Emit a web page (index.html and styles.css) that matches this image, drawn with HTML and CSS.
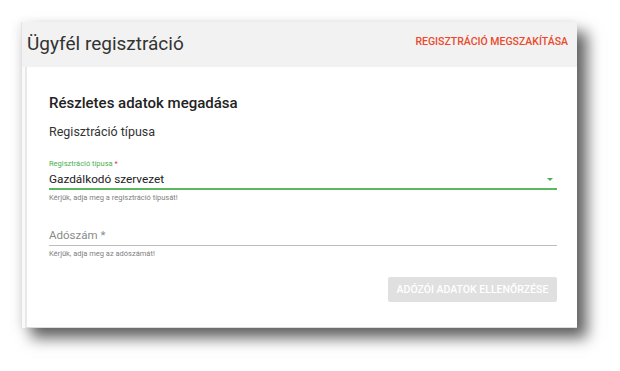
FILE: index.html
```html
<!DOCTYPE html>
<html lang="hu">
<head>
    <meta charset="UTF-8">
    <meta name="viewport" content="width=device-width, initial-scale=1.0">
    <title>Ügyfél regisztráció</title>
    <link rel="stylesheet" href="styles.css">
</head>
<body>
    <div class="page">
        <div class="window">
            <div class="topbar">
                <h1>Ügyfél regisztráció</h1>
                <a href="#" class="cancel-link">Regisztráció megszakítása</a>
            </div>
            <div class="card">
                <h2>Részletes adatok megadása</h2>
                <div class="section-title">Regisztráció típusa</div>

                <div class="field field-select">
                    <label class="field-label">Regisztráció típusa <span class="req">*</span></label>
                    <div class="field-input active">
                        <span>Gazdálkodó szervezet</span>
                        <span class="caret"></span>
                    </div>
                    <div class="hint">Kérjük, adja meg a regisztráció típusát!</div>
                </div>

                <div class="field field-text">
                    <div class="field-input">
                        <span class="placeholder">Adószám *</span>
                    </div>
                    <div class="hint">Kérjük, adja meg az adószámát!</div>
                </div>

                <div class="actions">
                    <button class="btn" disabled>Adózói adatok ellenőrzése</button>
                </div>
            </div>
        </div>
    </div>
</body>
</html>
```

FILE: styles.css
```css
body {
    margin: 0;
    padding: 0;
    background-color: #ffffff;
    font-family: Roboto, "Liberation Sans", Arial, sans-serif;
}
.page {
    padding: 22px 0 44px 21px;
}
.window {
    width: 555px;
    background-color: #fafafa;
    border-left: 1px solid #e2e2e2;
    box-shadow: 10px 10px 14px rgba(0, 0, 0, 0.62), -3px 0 10px rgba(0, 0, 0, 0.07);
}
.topbar {
    height: 45px;
    background-color: #f2f2f2;
    display: flex;
    align-items: center;
    justify-content: space-between;
    padding: 0 9px 0 5px;
}
h1 {
    margin: 0;
    font-size: 19px;
    font-weight: 400;
    color: #333;
    margin-top: -3px;
}
.cancel-link {
    color: #e94b2b;
    font-size: 10.5px;
    font-weight: 500;
    text-transform: uppercase;
    text-decoration: none;
    margin-top: -6px;
}
.card {
    background-color: #fff;
    margin-left: 3px;
    border-left: 2px solid #e8e8e8;
    border-bottom: 1px solid #dcdcdc;
    height: 260px;
    padding: 0 20px 0 22px;
}
h2 {
    margin: 0;
    padding-top: 27px;
    font-size: 15px;
    line-height: 18px;
    font-weight: 500;
    color: #222;
}
.section-title {
    margin-top: 12px;
    font-size: 12.5px;
    line-height: 15px;
    color: #333;
}
.field-select {
    margin-top: 20px;
}
.field-label {
    display: block;
    font-size: 7.5px;
    line-height: 10px;
    color: #4caf50;
}
.req {
    color: #e53935;
}
.field-input {
    display: flex;
    justify-content: space-between;
    align-items: center;
    border-bottom: 1px solid #bdbdbd;
    font-size: 11.8px;
    line-height: 15px;
    color: #222;
    padding: 4px 0 2px;
}
.field-input.active {
    border-bottom: 2px solid #5cb85c;
    padding: 3px 0 1px;
}
.caret {
    width: 0;
    height: 0;
    border-left: 3.5px solid transparent;
    border-right: 3.5px solid transparent;
    border-top: 3.5px solid #4caf50;
    margin-right: 4px;
}
.placeholder {
    color: #8a8a8a;
    font-size: 11.5px;
}
.hint {
    font-size: 7.5px;
    line-height: 10px;
    color: #808080;
    margin-top: 3px;
}
.field-text {
    margin-top: 21px;
}
.actions {
    display: flex;
    justify-content: flex-end;
    margin-top: 18px;
}
.btn {
    width: 169px;
    height: 25px;
    background-color: #e0e0e0;
    color: #fff;
    border: none;
    border-radius: 2px;
    font-family: Roboto, "Liberation Sans", Arial, sans-serif;
    font-size: 10.5px;
    font-weight: 500;
    text-transform: uppercase;
    padding: 0;
}
```
